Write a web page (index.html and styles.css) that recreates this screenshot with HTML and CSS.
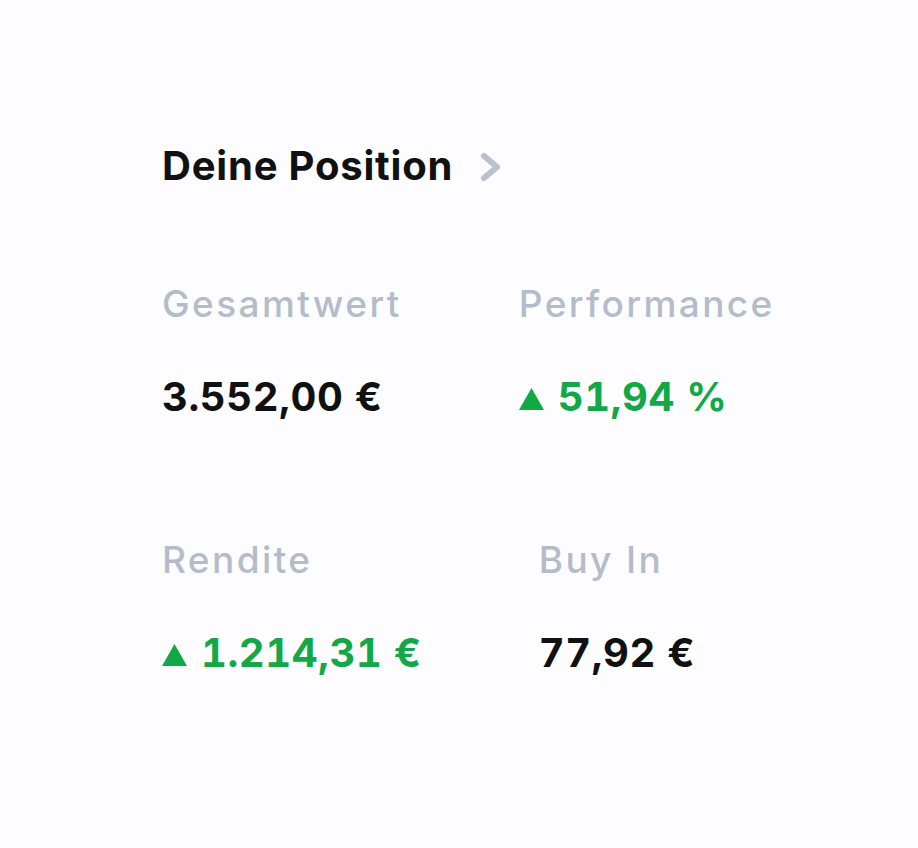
FILE: index.html
```html
<!DOCTYPE html>
<html lang="de">
<head>
<meta charset="utf-8">
<title>Deine Position</title>
<link rel="stylesheet" href="styles.css">
</head>
<body>
<main class="position">
  <h2 class="title">
    <span>Deine Position</span>
    <svg class="chevron" width="24" height="32" viewBox="0 0 24 32" aria-hidden="true">
      <path d="M5 5 L18 16 L5 27" fill="none" stroke="#b9c1cf" stroke-width="6" stroke-linecap="round" stroke-linejoin="round"/>
    </svg>
  </h2>
  <div class="row row-1">
    <div class="stat">
      <div class="label">Gesamtwert</div>
      <div class="value">3.552,00 €</div>
    </div>
    <div class="stat">
      <div class="label">Performance</div>
      <div class="value up"><svg class="tri" width="25" height="22" viewBox="0 0 25 22" aria-hidden="true"><path d="M12.5 0 L25 22 L0 22 Z" fill="#12a846"/></svg>51,94 %</div>
    </div>
  </div>
  <div class="row row-2">
    <div class="stat">
      <div class="label">Rendite</div>
      <div class="value up"><svg class="tri" width="25" height="22" viewBox="0 0 25 22" aria-hidden="true"><path d="M12.5 0 L25 22 L0 22 Z" fill="#12a846"/></svg>1.214,31 €</div>
    </div>
    <div class="stat">
      <div class="label">Buy In</div>
      <div class="value">77,92 €</div>
    </div>
  </div>
</main>
</body>
</html>
```

FILE: styles.css
```css
html, body {
  margin: 0;
  padding: 0;
}

body {
  background: #fdfcfe;
  font-family: Inter, "Liberation Sans", Arial, sans-serif;
  color: #111111;
  width: 918px;
  height: 848px;
  overflow: hidden;
}

.position {
  padding: 146px 0 0 162px;
  display: flex;
  flex-direction: column;
}

.title {
  margin: 0;
  display: flex;
  align-items: center;
  gap: 26px;
  font-size: 40px;
  line-height: 40px;
  font-weight: 700;
  letter-spacing: 0.8px;
}

.chevron {
  display: block;
  margin-top: 2px;
}

.row {
  display: flex;
  gap: 117px;
}

.row-1 {
  margin-top: 100px;
}

.row-2 {
  margin-top: 125px;
}

.stat {
  display: flex;
  flex-direction: column;
  gap: 56px;
}

.label {
  font-size: 37px;
  line-height: 35px;
  font-weight: 500;
  color: #b4bccb;
  letter-spacing: 2.4px;
}

.value {
  display: flex;
  align-items: baseline;
  font-size: 40px;
  line-height: 40px;
  font-weight: 700;
  letter-spacing: 0.6px;
  font-variant-numeric: tabular-nums;
}

.value.up {
  color: #12a846;
}

.tri {
  margin-right: 14px;
  align-self: center;
  margin-top: 4px;
}
```
